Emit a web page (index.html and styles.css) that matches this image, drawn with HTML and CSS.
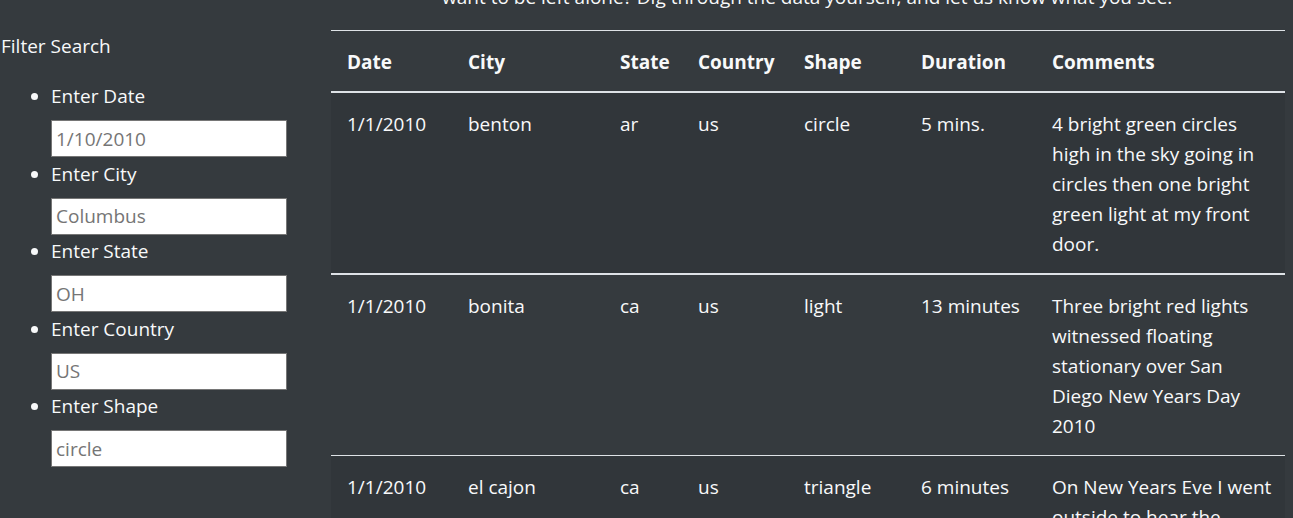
FILE: index.html
```
<!DOCTYPE html>
<html lang="en">
<head>
<meta charset="utf-8">
<meta name="viewport" content="width=device-width, initial-scale=1">
<title>UFO Sightings</title>
<link rel="stylesheet" href="styles.css">
</head>
<body>
<div class="layout">
  <aside class="sidebar">
    <form>
      <p class="sidebar-title">Filter Search</p>
      <ul class="filters">
        <li class="filter"><label for="date">Enter Date</label><input id="date" type="text" placeholder="1/10/2010"></li>
        <li class="filter"><label for="city">Enter City</label><input id="city" type="text" placeholder="Columbus"></li>
        <li class="filter"><label for="state">Enter State</label><input id="state" type="text" placeholder="OH"></li>
        <li class="filter"><label for="country">Enter Country</label><input id="country" type="text" placeholder="US"></li>
        <li class="filter"><label for="shape">Enter Shape</label><input id="shape" type="text" placeholder="circle"></li>
      </ul>
    </form>
  </aside>
  <main class="content">
    <div class="intro"><p>want to be left alone? Dig through the data yourself, and let us know what you see.</p></div>
    <table class="sightings">
      <colgroup><col class="c-date"><col class="c-city"><col class="c-state"><col class="c-country"><col class="c-shape"><col class="c-duration"><col></colgroup>
      <thead>
        <tr><th>Date</th><th>City</th><th>State</th><th>Country</th><th>Shape</th><th>Duration</th><th>Comments</th></tr>
      </thead>
      <tbody>
        <tr><td>1/1/2010</td><td>benton</td><td>ar</td><td>us</td><td>circle</td><td>5 mins.</td><td>4 bright green circles high in the sky going in circles then one bright green light at my front door.</td></tr>
        <tr class="divided"><td>1/1/2010</td><td>bonita</td><td>ca</td><td>us</td><td>light</td><td>13 minutes</td><td>Three bright red lights witnessed floating stationary over San Diego New Years Day 2010</td></tr>
        <tr><td>1/1/2010</td><td>el cajon</td><td>ca</td><td>us</td><td>triangle</td><td>6 minutes</td><td>On New Years Eve I went outside to hear the</td></tr>
      </tbody>
    </table>
  </main>
</div>
</body>
</html>
```
FILE: styles.css
```
* { box-sizing: border-box; }
body {
  margin: 0;
  height: 100vh;
  overflow: hidden;
  background: #353a3e;
  color: #f8f9fa;
  font: 19px/30px "Open Sans", "Noto Sans", sans-serif;
}
.layout {
  display: grid;
  grid-template-columns: 331px 1fr;
  padding-right: 8px;
}
.sidebar { padding: 31px 44px 0 1px; }
.sidebar-title { margin: 0 0 20px; }
.filters {
  display: grid;
  grid-template-rows: repeat(5, 1fr);
  height: 388px;
  margin: 0;
  padding-left: 50px;
}
.filter label {
  display: block;
  margin-bottom: 9px;
}
.filter input {
  display: block;
  width: 100%;
  height: 37px;
  padding: 0 4px;
  border: 1px solid #767676;
  border-radius: 0;
  background: #fff;
  color: #212529;
  font: inherit;
}
.filter input::placeholder { color: #757575; opacity: 1; }
.intro {
  display: flex;
  align-items: flex-end;
  height: 12px;
  margin-bottom: 18px;
  padding-left: 111px;
  overflow: hidden;
  white-space: nowrap;
}
.intro p { margin: 0; }
.sightings {
  width: 100%;
  table-layout: fixed;
  border-collapse: separate;
  border-spacing: 0;
}
.c-date { width: 121px; }
.c-city { width: 152px; }
.c-state { width: 78px; }
.c-country { width: 106px; }
.c-shape { width: 117px; }
.c-duration { width: 131px; }
.sightings th,
.sightings td {
  padding: 16px 0 14px 16px;
  border-top: 1px solid #dee2e6;
  text-align: left;
  vertical-align: top;
}
.sightings th:last-child,
.sightings td:last-child { padding-right: 10px; }
.sightings th { border-bottom: 2px solid #dee2e6; }
.sightings tbody tr:first-child td { border-top: 0; }
.sightings tbody .divided td { border-top-width: 2px; }
.sightings tbody tr:nth-child(odd) { background: #31363a; }
```
